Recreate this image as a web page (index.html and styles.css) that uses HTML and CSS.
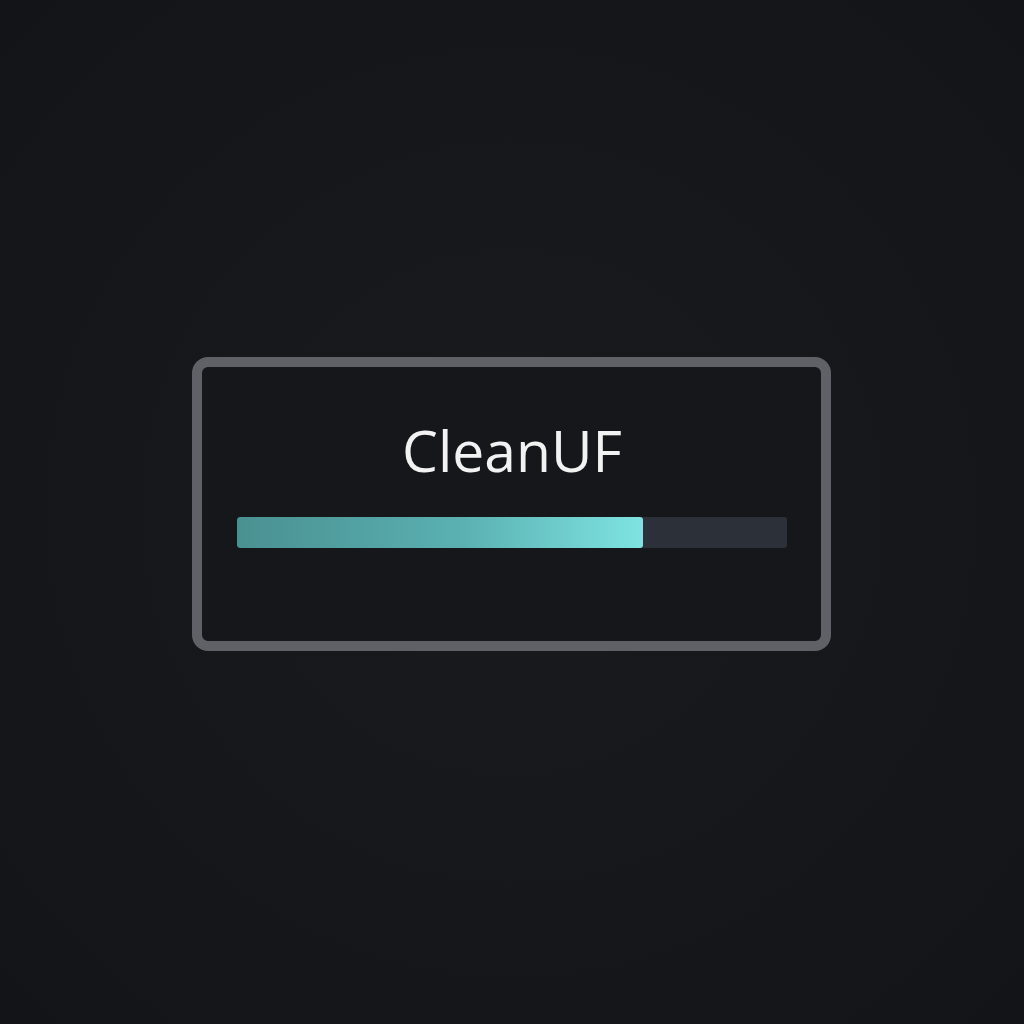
FILE: index.html
```html
<!DOCTYPE html>
<html lang="en">
<head>
<meta charset="utf-8">
<title>CleanUF</title>
<link rel="stylesheet" href="styles.css">
</head>
<body>
  <main class="stage">
    <section class="loader">
      <h1 class="title">CleanUF</h1>
      <div class="track">
        <div class="fill" style="width: 73.8%"></div>
      </div>
    </section>
  </main>
</body>
</html>
```

FILE: styles.css
```css
html, body {
  margin: 0;
  padding: 0;
  width: 100%;
  height: 100%;
}

body {
  background: radial-gradient(ellipse at 50% 50%, #191a1e 0%, #16171a 60%, #131417 100%);
  font-family: "Open Sans", "Noto Sans", sans-serif;
}

.stage {
  width: 1024px;
  height: 1024px;
  display: flex;
  align-items: flex-start;
  justify-content: flex-start;
  padding: 357px 0 0 192px;
  box-sizing: border-box;
}

.loader {
  box-sizing: border-box;
  width: 639px;
  height: 294px;
  border: 10px solid #5f6167;
  border-radius: 16px;
  background: #16171b;
  padding: 50px 34px 0 35px;
  display: flex;
  flex-direction: column;
  align-items: stretch;
}

.title {
  margin: 0;
  font-size: 57px;
  line-height: 67px;
  font-weight: 500;
  color: #f2f2f2;
  text-align: center;
  letter-spacing: 0;
}

.track {
  margin-top: 33px;
  height: 31px;
  background: #2c3038;
  border-radius: 3px;
  overflow: hidden;
  display: flex;
}

.fill {
  height: 100%;
  background: linear-gradient(90deg, #4a9091 0%, #5ab0b1 55%, #7ee4e1 100%);
  border-radius: 3px;
}
```
